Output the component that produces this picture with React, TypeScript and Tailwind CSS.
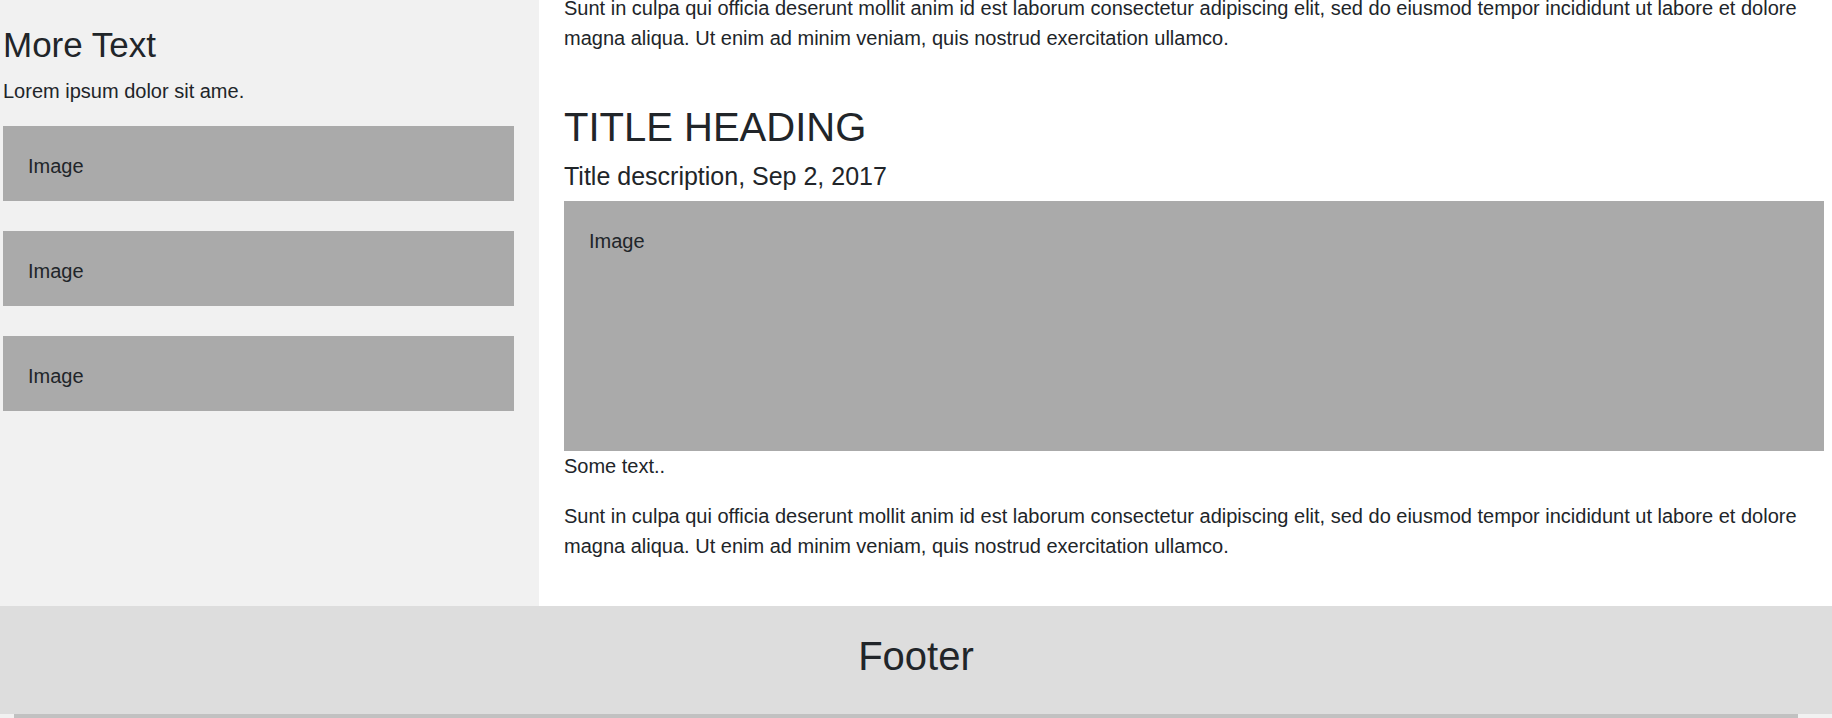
export default function App() {
  const lorem =
    "Sunt in culpa qui officia deserunt mollit anim id est laborum consectetur adipiscing elit, sed do eiusmod tempor incididunt ut labore et dolore magna aliqua. Ut enim ad minim veniam, quis nostrud exercitation ullamco.";
  return (
    <div className="w-[1832px] h-[718px] overflow-hidden flex flex-col bg-white text-[#212529] text-[20px] leading-[30px] font-['Liberation_Sans',Arial,sans-serif]">
      <div className="flex h-[606px] shrink-0">
        <aside className="w-[539px] shrink-0 bg-[#f1f1f1] pl-[3px] pr-[25px] pt-[24px]">
          <h3 className="text-[35px] leading-[42px] font-normal mb-[10px]">More Text</h3>
          <p className="mb-[20px]">Lorem ipsum dolor sit ame.</p>
          <div className="flex flex-col gap-[30px]">
            <div className="h-[75px] bg-[#aaa] pt-[25px] px-[25px]">Image</div>
            <div className="h-[75px] bg-[#aaa] pt-[25px] px-[25px]">Image</div>
            <div className="h-[75px] bg-[#aaa] pt-[25px] px-[25px]">Image</div>
          </div>
        </aside>
        <main className="flex-1 flex flex-col pl-[25px] pr-[8px]">
          <p className="-mt-[7px] mb-[20px]">{lorem}</p>
          <h2 className="mt-[30px] text-[40px] leading-[48px] font-normal mb-[10px]">TITLE HEADING</h2>
          <h5 className="text-[25px] leading-[30px] font-normal mb-[10px]">Title description, Sep 2, 2017</h5>
          <div className="h-[250px] shrink-0 bg-[#aaa] pt-[25px] px-[25px]">Image</div>
          <p className="mb-[20px]">Some text..</p>
          <p>{lorem}</p>
        </main>
      </div>
      <footer className="h-[108px] shrink-0 bg-[#ddd] pt-[26px] text-center">
        <p className="text-[40px] leading-[48px]">Footer</p>
      </footer>
      <div className="h-[4px] shrink-0 bg-[#f1f1f1] pl-[14px] pr-[34px]">
        <div className="h-full bg-[#c1c1c1]" />
      </div>
    </div>
  );
}
